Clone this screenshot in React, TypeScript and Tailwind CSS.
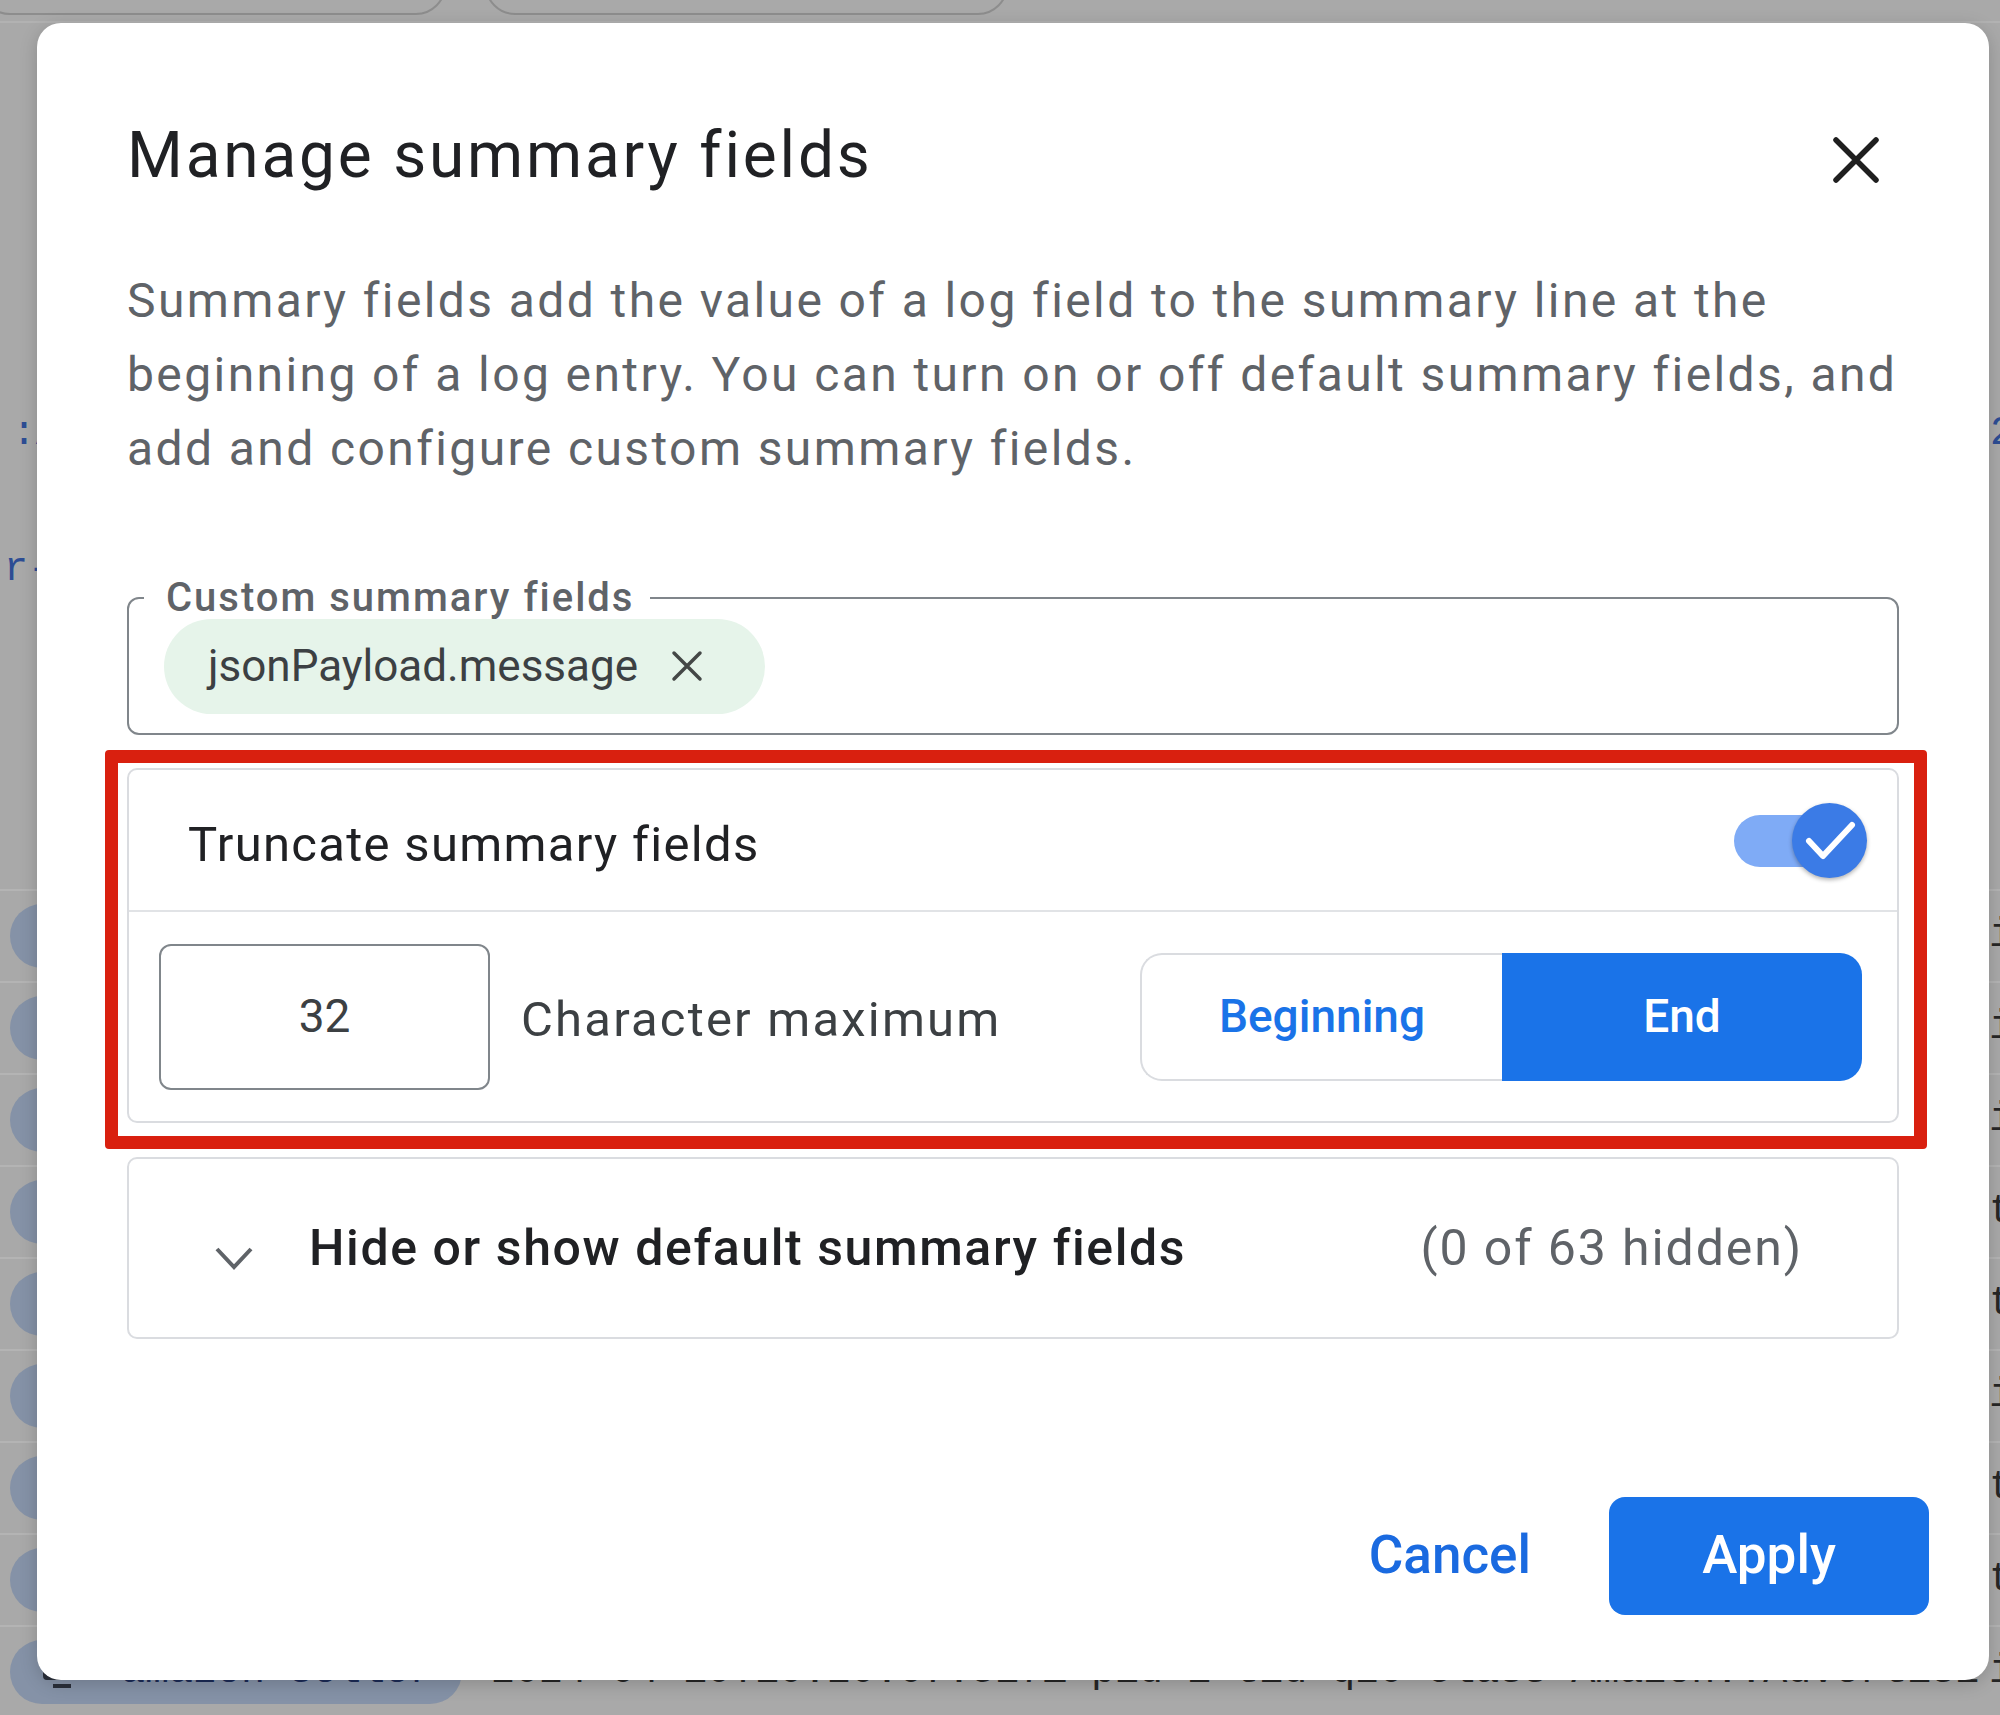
import React from "react";

const rightChars = ["i", "i", "i", "t", "t", "i", "t", "t", "i"];

function LogRow({ ch }: { ch: string }) {
  return (
    <div className="flex h-[92px] items-center border-t-2 border-[#b4b4b4]">
      <div className="ml-[10px] flex h-[64px] w-[452px] shrink-0 items-center rounded-full bg-[#8592a7]">
        <svg width="46" height="40" viewBox="0 0 46 40" className="ml-[31px]">
          <rect x="4" y="6" width="30" height="20" rx="2" fill="none" stroke="#2a2f3a" strokeWidth="4" />
          <path d="M12 34 H30" stroke="#2a2f3a" strokeWidth="4" />
        </svg>
        <span className="ml-[34px] text-[40px] text-[#1b2b57] font-['Liberation_Mono',monospace] whitespace-nowrap">
          amazon-seller
        </span>
      </div>
      <div className="ml-[29px] w-[1498px] shrink-0 overflow-hidden whitespace-nowrap text-[40px] text-[#262626] font-['Liberation_Mono',monospace]">
        2024-04-10T10:20:07.517Z pid=1 tid=q20 class=Amazon::Advertisi
      </div>
      <div className="w-[11px] shrink-0 overflow-hidden text-[40px] text-[#262626] font-['Liberation_Mono',monospace]">
        {ch}
      </div>
    </div>
  );
}

function CloseIcon() {
  return (
    <svg width="46" height="46" viewBox="0 0 46 46">
      <path d="M3 3 L43 43 M43 3 L3 43" stroke="#1f1f1f" strokeWidth="5.5" strokeLinecap="round" />
    </svg>
  );
}

export default function App() {
  return (
    <div className="relative h-[1715px] w-[2000px] overflow-hidden bg-[#a9a9a9] font-[Roboto,sans-serif]">
      {/* background page (dimmed by the modal overlay) */}
      <div className="flex h-[23px] items-end overflow-hidden border-b-2 border-[#b2b2b2]">
        <div className="-ml-[20px] mb-[6px] h-[60px] w-[466px] shrink-0 rounded-full border-2 border-[#8d8d8d]" />
        <div className="ml-[39px] mb-[6px] h-[60px] w-[523px] shrink-0 rounded-full border-2 border-[#8d8d8d]" />
      </div>
      <div className="h-[386px]" />
      <div className="flex h-[50px] items-center justify-between text-[40px] text-[#2d4d94] font-['Liberation_Mono',monospace]">
        <span className="ml-[12px]">:A</span>
        <span className="-mr-[14px]">2</span>
      </div>
      <div className="h-[86px]" />
      <div className="flex h-[50px] items-center text-[40px] text-[#2d4d94] font-['Liberation_Mono',monospace]">
        <span className="ml-[4px]">r-</span>
      </div>
      <div className="h-[294px]" />
      <div className="flex flex-col">
        {rightChars.map((c, i) => (
          <LogRow key={i} ch={c} />
        ))}
      </div>

      {/* modal dialog */}
      <div className="absolute left-[37px] top-[23px] flex h-[1657px] w-[1952px] flex-col rounded-[24px] bg-white pl-[90px] pr-[90px] pt-[101px] shadow-[0_4px_18px_rgba(0,0,0,0.18)]">
        <div className="flex items-start justify-between">
          <h1 className="text-[64px] leading-[64px] tracking-[2.8px] text-[#202124]">Manage summary fields</h1>
          <div className="mr-[11px] mt-[4px] flex h-[64px] w-[64px] items-center justify-center">
            <CloseIcon />
          </div>
        </div>

        <p className="mt-[72px] whitespace-nowrap text-[48px] leading-[74px] tracking-[2.4px] text-[#5f6368]">
          Summary fields add the value of a log field to the summary line at the
          <br />
          beginning of a log entry. You can turn on or off default summary fields, and
          <br />
          add and configure custom summary fields.
        </p>

        {/* custom summary fields outlined box */}
        <div className="relative mt-[111px] flex h-[138px] items-center rounded-[12px] border-2 border-[#80868b] pl-[35px]">
          <span className="absolute -top-[21px] left-[15px] bg-white pl-[22px] pr-[16px] text-[40px] leading-[40px] tracking-[2px] font-medium text-[#5f6368]">
            Custom summary fields
          </span>
          <div className="flex h-[95px] items-center rounded-full bg-[#e6f4ea] pl-[44px] pr-[62px]">
            <span className="text-[44px] text-[#3c4043]">jsonPayload.message</span>
            <svg width="32" height="32" viewBox="0 0 32 32" className="ml-[33px]">
              <path d="M3 3 L29 29 M29 3 L3 29" stroke="#444746" strokeWidth="3.5" strokeLinecap="round" />
            </svg>
          </div>
        </div>

        {/* truncate card */}
        <div className="relative mt-[33px] rounded-[10px] border-2 border-[#dadce0]">
          <div className="flex h-[142px] items-center justify-between border-b-2 border-[#e1e3e6] pl-[59px] pr-[30px]">
            <span className="mt-[10px] text-[49px] tracking-[1.3px] text-[#202124]">Truncate summary fields</span>
            <div className="relative h-[75px] w-[133px]">
              <div className="absolute left-0 top-[12px] h-[52px] w-[116px] rounded-full bg-[#7fabf6]" />
              <div className="absolute right-0 top-0 flex h-[75px] w-[75px] items-center justify-center rounded-full bg-[#3b7be6] shadow-[0_2px_4px_rgba(0,0,0,0.3)]">
                <svg width="75" height="75" viewBox="0 0 75 75">
                  <path d="M17 38 L31 53 L60 22" fill="none" stroke="white" strokeWidth="6" strokeLinecap="round" strokeLinejoin="round" />
                </svg>
              </div>
            </div>
          </div>
          <div className="flex h-[209px] items-center pl-[30px] pr-[35px]">
            <div className="flex h-[146px] w-[331px] items-center justify-center rounded-[12px] border-2 border-[#80868b] text-[46px] text-[#3c4043]">
              32
            </div>
            <span className="ml-[31px] mt-[6px] text-[49px] tracking-[2.2px] text-[#3c4043]">Character maximum</span>
            <div className="ml-auto flex h-[128px] w-[722px]">
              <div className="flex flex-1 items-center justify-center rounded-l-[22px] border-2 border-r-0 border-[#dadce0] text-[46px] font-medium text-[#1a73e8]">
                Beginning
              </div>
              <div className="flex flex-1 items-center justify-center rounded-r-[22px] bg-[#1a73e8] text-[46px] font-medium text-white">
                End
              </div>
            </div>
          </div>
          {/* red highlight annotation */}
          <div className="pointer-events-none absolute -bottom-[28px] -left-[24px] -right-[30px] -top-[20px] rounded-[4px] border-[13px] border-[#d9200f]" />
        </div>

        {/* hide/show default fields */}
        <div className="mt-[34px] flex h-[182px] items-center rounded-[10px] border-2 border-[#dadce0] pl-[85px] pr-[94px]">
          <svg width="40" height="26" viewBox="0 0 40 26" className="mt-[20px]">
            <path d="M3 4 L20 22 L37 4" fill="none" stroke="#5f6368" strokeWidth="4" />
          </svg>
          <span className="ml-[55px] text-[50px] font-medium tracking-[1.6px] text-[#202124]">Hide or show default summary fields</span>
          <span className="ml-auto text-[50px] tracking-[1.9px] text-[#5f6368]">(0 of 63 hidden)</span>
        </div>

        {/* footer */}
        <div className="-mr-[30px] mt-auto flex items-center justify-end pb-[65px]">
          <span className="mr-[78px] text-[53px] font-medium text-[#1a6ae0]">Cancel</span>
          <div className="flex h-[118px] w-[320px] items-center justify-center rounded-[16px] bg-[#1a73e8] text-[53px] font-medium text-white">
            Apply
          </div>
        </div>
      </div>
    </div>
  );
}
